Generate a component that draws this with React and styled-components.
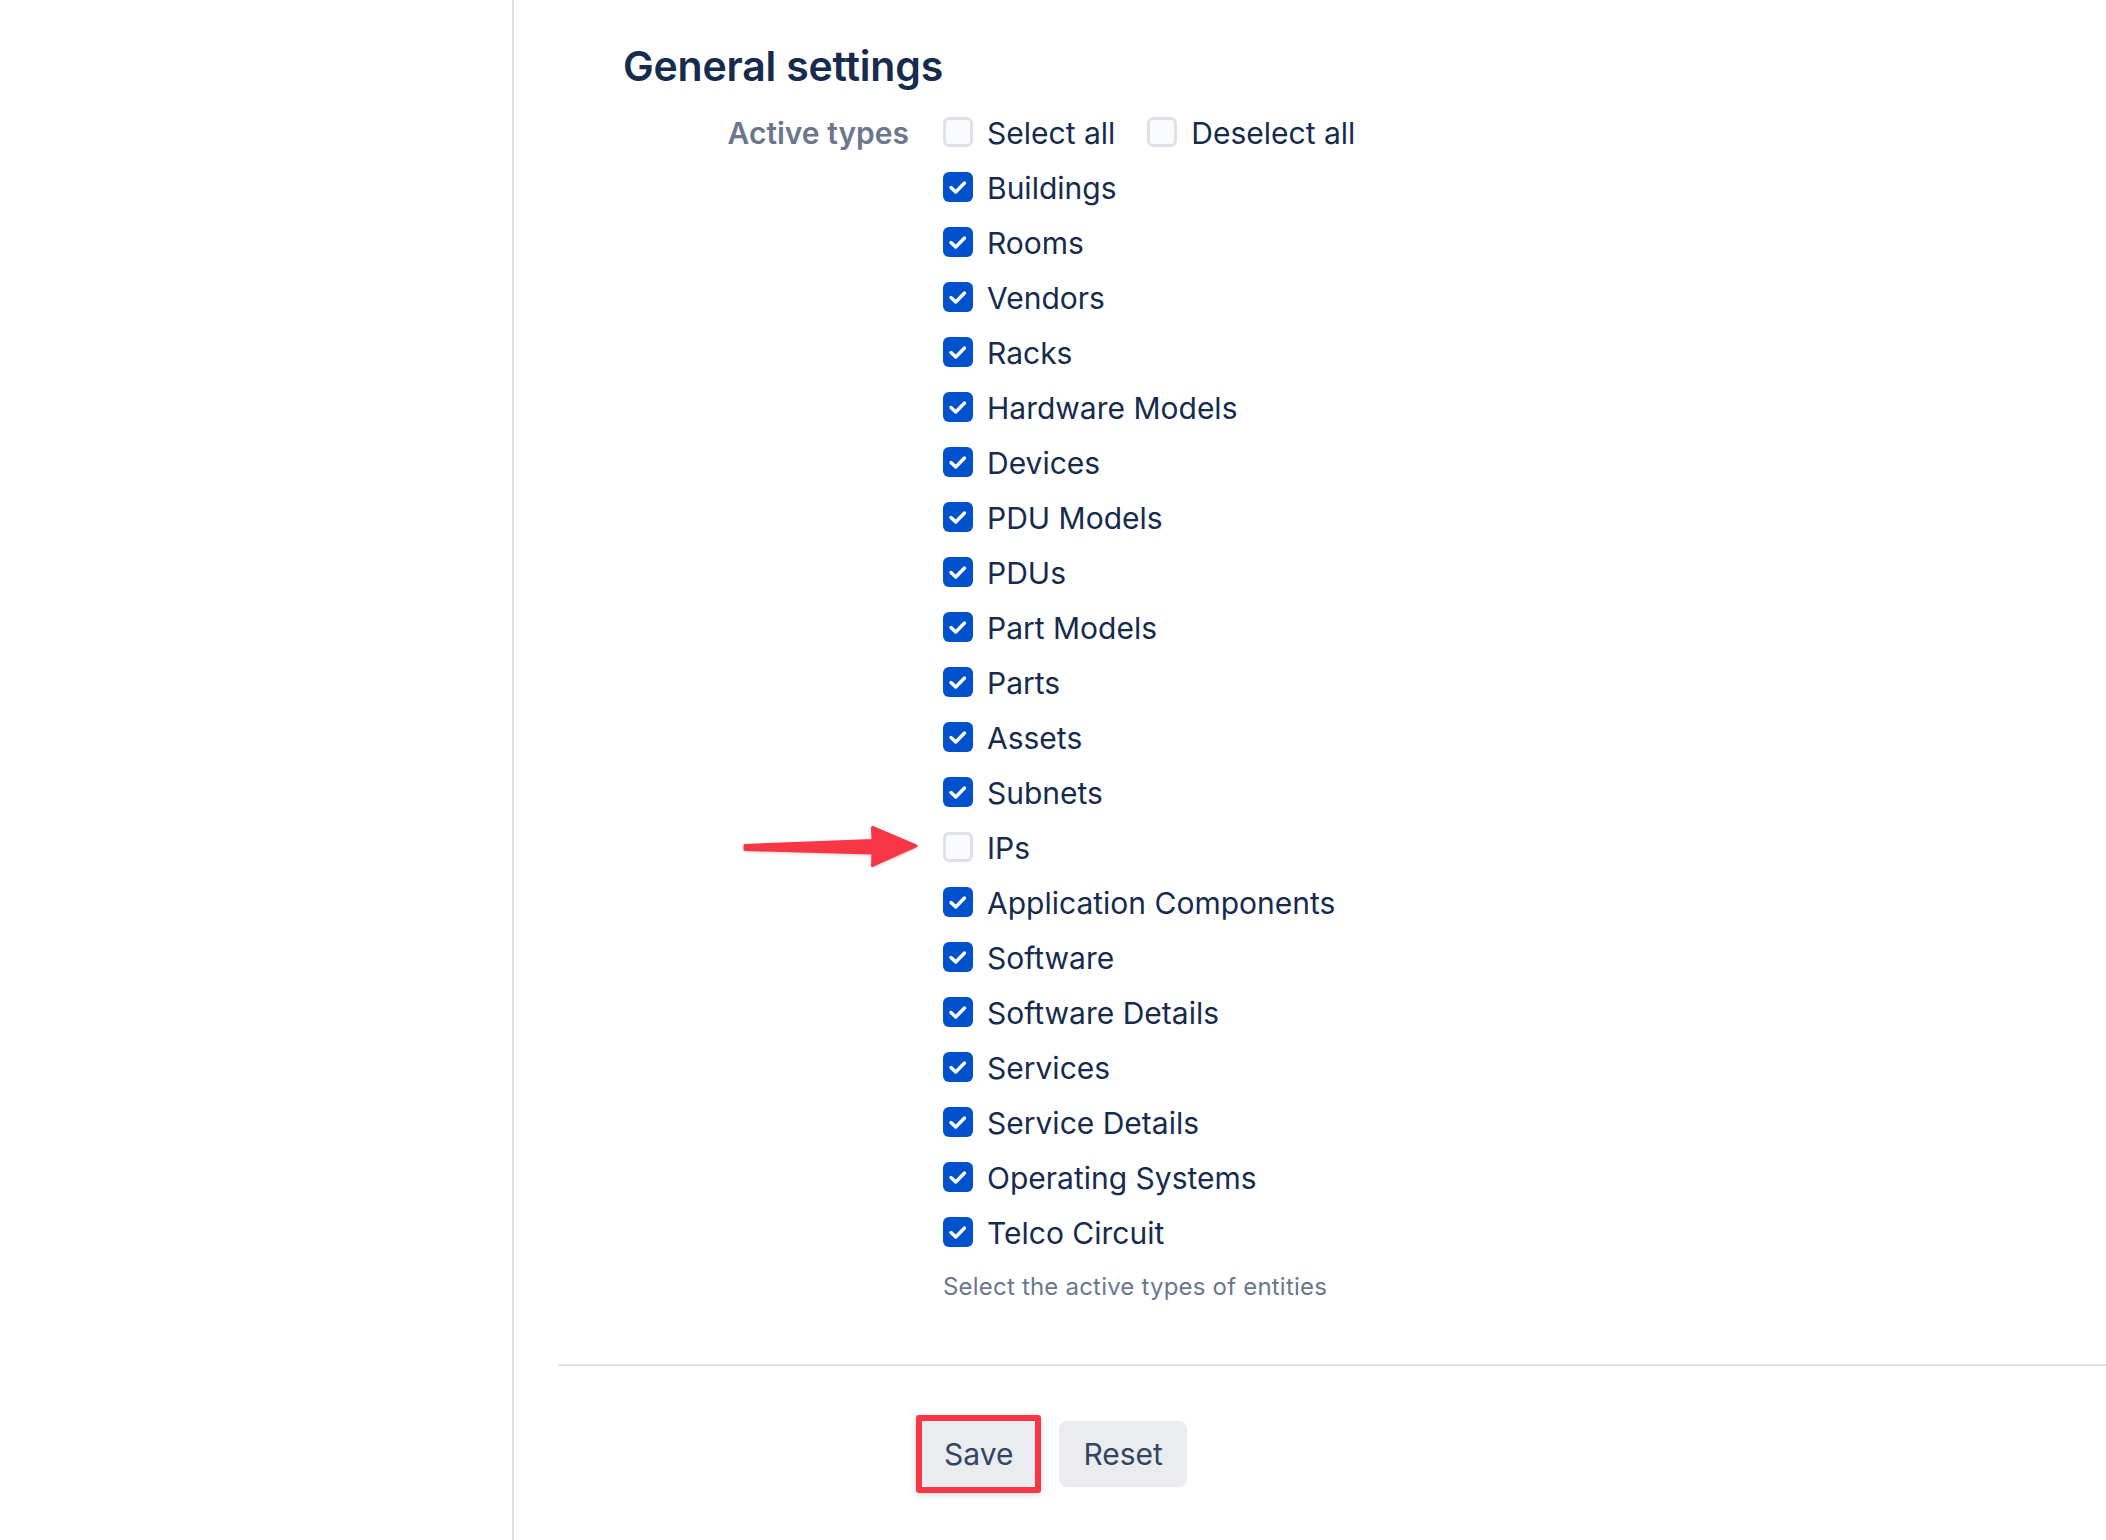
import React from 'react';
import styled, { createGlobalStyle } from 'styled-components';

const GlobalStyle = createGlobalStyle`
  html, body {
    margin: 0;
    padding: 0;
    background: #ffffff;
  }
  body {
    font-family: 'Inter', 'Noto Sans', sans-serif;
    color: #172b4d;
  }
`;

const Layout = styled.div`
  display: flex;
  min-height: 100vh;
`;

const Sidebar = styled.aside`
  width: 512px;
  flex-shrink: 0;
  border-right: 2px solid #dfe1e6;
`;

const Main = styled.main`
  flex: 1;
  padding: 41px 0 0 44px;
`;

const Title = styled.h2`
  margin: 0 0 15px 65px;
  font-size: 41px;
  line-height: 50px;
  font-weight: 600;
  letter-spacing: -0.2px;
  color: #172b4d;
`;

const FormGrid = styled.div`
  display: grid;
  grid-template-columns: 351px 1fr;
  column-gap: 34px;
`;

const FieldLabel = styled.div`
  text-align: right;
  font-size: 30px;
  line-height: 55px;
  font-weight: 600;
  color: #6b778c;
`;

const Options = styled.div`
  display: flex;
  flex-direction: column;
`;

const Row = styled.div`
  position: relative;
  display: flex;
  align-items: center;
  gap: 32px;
  height: 55px;
`;

const Option = styled.label`
  display: flex;
  align-items: center;
  gap: 14px;
  font-size: 30px;
  line-height: 55px;
  color: #172b4d;
`;

const Box = styled.span`
  display: flex;
  align-items: center;
  justify-content: center;
  box-sizing: border-box;
  width: 30px;
  height: 30px;
  margin-bottom: 4px;
  border-radius: 6px;
  background: ${(p) => (p.$checked ? '#0052cc' : '#fafbfc')};
  border: ${(p) => (p.$checked ? 'none' : '3px solid #dfe1e6')};
`;

const Helper = styled.div`
  margin-top: 10px;
  font-size: 24px;
  line-height: 32px;
  letter-spacing: 0.2px;
  color: #6b778c;
`;

const Divider = styled.hr`
  margin: 61px 0 0;
  border: none;
  height: 2px;
  background: #dfe1e6;
`;

const Footer = styled.div`
  display: flex;
  gap: 22px;
  padding: 55px 0 0 362px;
`;

const Button = styled.button`
  position: relative;
  height: 66px;
  padding: 0 24px;
  border: none;
  border-radius: 8px;
  background: #ebecf0;
  font-family: 'Inter', sans-serif;
  font-size: 30px;
  font-weight: 400;
  color: #344563;
  cursor: pointer;

  ${(p) =>
    p.$highlight &&
    `
    &::after {
      content: '';
      position: absolute;
      top: -6px;
      bottom: -6px;
      left: -4px;
      right: -4px;
      border: 6px solid #f83646;
      border-radius: 3px;
      box-shadow: 0 2px 6px rgba(0, 0, 0, 0.15);
    }
  `}
`;

const Arrow = styled.svg`
  position: absolute;
  left: -203px;
  top: -1px;
  width: 185px;
  height: 52px;
  filter: drop-shadow(0 1px 1.5px rgba(0, 0, 0, 0.2));
`;

const types = [
  ['Buildings', true],
  ['Rooms', true],
  ['Vendors', true],
  ['Racks', true],
  ['Hardware Models', true],
  ['Devices', true],
  ['PDU Models', true],
  ['PDUs', true],
  ['Part Models', true],
  ['Parts', true],
  ['Assets', true],
  ['Subnets', true],
  ['IPs', false],
  ['Application Components', true],
  ['Software', true],
  ['Software Details', true],
  ['Services', true],
  ['Service Details', true],
  ['Operating Systems', true],
  ['Telco Circuit', true],
];

const Checkbox = ({ checked }) => (
  <Box $checked={checked}>
    {checked && (
      <svg width="30" height="30" viewBox="0 0 30 30">
        <path
          d="M8 15.5 L12.7 20 L21.5 11"
          fill="none"
          stroke="#fff"
          strokeWidth="3.4"
          strokeLinecap="round"
          strokeLinejoin="round"
        />
      </svg>
    )}
  </Box>
);

const PointerArrow = () => (
  <Arrow viewBox="0 0 185 52">
    <path
      d="M5 25.5 L133 20.5 L132.5 7.5 L176 26 L132.5 45.5 L133 33 L5 29.5 Z"
      fill="#f83646"
      stroke="#f83646"
      strokeWidth="3"
      strokeLinejoin="round"
    />
  </Arrow>
);

const App = () => {
  return (
    <Layout>
      <GlobalStyle />
      <Sidebar />
      <Main>
        <Title>General settings</Title>
        <FormGrid>
          <FieldLabel>Active types</FieldLabel>
          <Options>
            <Row>
              <Option>
                <Checkbox checked={false} />
                Select all
              </Option>
              <Option>
                <Checkbox checked={false} />
                Deselect all
              </Option>
            </Row>
            {types.map(([name, checked]) => (
              <Row key={name}>
                {name === 'IPs' && <PointerArrow />}
                <Option>
                  <Checkbox checked={checked} />
                  {name}
                </Option>
              </Row>
            ))}
            <Helper>Select the active types of entities</Helper>
          </Options>
        </FormGrid>
        <Divider />
        <Footer>
          <Button $highlight>Save</Button>
          <Button>Reset</Button>
        </Footer>
      </Main>
    </Layout>
  );
};

export default App;
